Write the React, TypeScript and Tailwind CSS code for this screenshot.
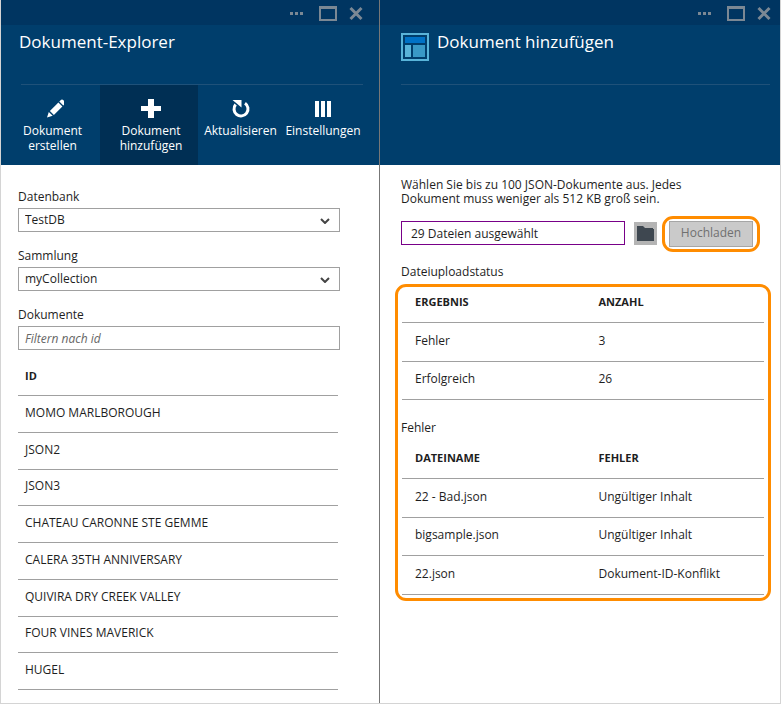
import type { ReactNode } from "react";

const documents = [
  "MOMO MARLBOROUGH",
  "JSON2",
  "JSON3",
  "CHATEAU CARONNE STE GEMME",
  "CALERA 35TH ANNIVERSARY",
  "QUIVIRA DRY CREEK VALLEY",
  "FOUR VINES MAVERICK",
  "HUGEL",
];

const results = [
  ["Fehler", "3"],
  ["Erfolgreich", "26"],
];

const errors = [
  ["22 - Bad.json", "Ungültiger Inhalt"],
  ["bigsample.json", "Ungültiger Inhalt"],
  ["22.json", "Dokument-ID-Konflikt"],
];

function WindowBar({ padding }: { padding: string }) {
  return (
    <div className={`flex h-[25px] items-center justify-end bg-[#003561] text-[#7b8894] ${padding}`}>
      <button type="button" aria-label="Mehr" className="mr-4">
        <svg width="14" height="16" viewBox="0 0 14 16" fill="currentColor" className="block" shapeRendering="crispEdges">
          <path d="M1 7h3v3H1zM6 7h3v3H6zM11 7h3v3h-3z" />
        </svg>
      </button>
      <button type="button" aria-label="Maximieren" className="mr-3">
        <svg width="18" height="16" viewBox="0 0 18 16" fill="currentColor" className="block" shapeRendering="crispEdges">
          <path fillRule="evenodd" d="M0 1h18v15H0zM2 4v10h14V4z" />
        </svg>
      </button>
      <button type="button" aria-label="Schließen">
        <svg width="14" height="16" viewBox="0 0 14 16" fill="none" stroke="currentColor" strokeWidth="3" className="block">
          <path d="M1.5 3l11 11M12.5 3l-11 11" />
        </svg>
      </button>
    </div>
  );
}

function ToolButton({ label, icon, size }: { label: string; icon: ReactNode; size: string }) {
  return (
    <button type="button" className={`flex h-20 flex-col items-center pt-[13px] text-[12px] leading-[15px] text-white ${size}`}>
      <svg width="22" height="20" viewBox="0 0 22 20" className="mb-[5px] block shrink-0">
        {icon}
      </svg>
      <span>{label}</span>
    </button>
  );
}

function SelectField({ id, label, value }: { id: string; label: string; value: string }) {
  return (
    <div className="mb-4">
      <label htmlFor={id} className="mb-[3px] block leading-4">{label}</label>
      <div className="relative">
        <select id={id} className="block h-6 w-full appearance-none rounded-none border border-[#a0a0a0] bg-white pl-[6px]">
          <option>{value}</option>
        </select>
        <svg width="10" height="6" viewBox="0 0 10 6" fill="none" stroke="#444" strokeWidth="2" className="pointer-events-none absolute top-[10px] right-[10px]">
          <path d="M1 1l4 4 4-4" />
        </svg>
      </div>
    </div>
  );
}

function ResultTable({ head, rows, label, size }: { head: string[]; rows: string[][]; label: string; size: string }) {
  return (
    <table aria-label={label} className={`w-full table-fixed border-separate border-spacing-0 text-left ${size}`}>
      <thead>
        <tr className="h-9">
          <th className="w-[54%] border-b border-[#a0a0a0] pb-[5px] pl-[13px] text-[11px]">{head[0]}</th>
          <th className="border-b border-[#a0a0a0] pb-[5px] pl-px text-[11px]">{head[1]}</th>
        </tr>
      </thead>
      <tbody>
        {rows.map((row) => (
          <tr key={row[0]}>
            <td className="border-b border-[#a0a0a0] pb-[2px] pl-[13px]">{row[0]}</td>
            <td className="border-b border-[#a0a0a0] pb-[2px] pl-px">{row[1]}</td>
          </tr>
        ))}
      </tbody>
    </table>
  );
}

export default function App() {
  return (
    <main className="grid min-h-screen grid-cols-[380fr_401fr] border-b border-[#d4d4d4] bg-white font-['Open_Sans','Segoe_UI',sans-serif] text-[12px] text-[#1e1e1e]">
      <section className="border-r border-l border-r-[#777] border-l-[#d4d4d4]">
        <header className="h-[165px] bg-[#003e6c]">
          <WindowBar padding="pr-4" />
          <div className="mr-4 ml-5 h-[60px] border-b border-[#1f5179] pt-[3px]">
            <h1 className="-ml-[2px] text-[17px] leading-7 text-white">Dokument-Explorer</h1>
          </div>
          <nav className="flex pl-1">
            <ToolButton
              label="Dokument erstellen"
              size="w-[95px] px-3"
              icon={
                <g fill="#fff" transform="translate(5 1)">
                  <path d="M0 18.500l1.800-5.600 3.900 3.900zM2.900 11.900l8.500-8.500 4 4-8.500 8.500zM12.300 2.500l1.300-1.300c.8-.8 2-.8 2.800 0l1.200 1.200c.8.8.8 2 0 2.800l-1.300 1.300z" />
                </g>
              }
            />
            <ToolButton
              label="Dokument hinzufügen"
              size="w-[98px] bg-[#002f54] pr-2 pl-3"
              icon={<path fill="#fff" d="M8 1h6v7h7v5h-7v7H8v-7H1V8h7z" />}
            />
            <ToolButton
              label="Aktualisieren"
              size="w-[85px]"
              icon={
                <g>
                  <path d="M5.600 6.500A7 7 0 1 0 15 5.200" fill="none" stroke="#fff" strokeWidth="3" />
                  <path fill="#fff" d="M2.500 2h9v7.500z" />
                </g>
              }
            />
            <ToolButton
              label="Einstellungen"
              size="w-20"
              icon={<path fill="#fff" shapeRendering="crispEdges" d="M3 3h4v16H3zM9 3h4v16H9zM15 3h4v16h-4z" />}
            />
          </nav>
        </header>

        <div className="pt-6 pr-[39px] pl-[17px]">
          <SelectField id="database" label="Datenbank" value="TestDB" />
          <SelectField id="collection" label="Sammlung" value="myCollection" />
          <label htmlFor="filter" className="mb-[3px] block leading-4">Dokumente</label>
          <input
            id="filter"
            type="text"
            placeholder="Filtern nach id"
            className="mb-[9px] block h-6 w-full border border-[#a0a0a0] px-[6px] italic placeholder:text-[#666]"
          />
          <div className="pr-[2px]">
            <table aria-label="Dokumente" className="h-[331px] w-full border-separate border-spacing-0 text-left">
              <thead>
                <tr className="h-[37px]">
                  <th className="border-b border-[#a0a0a0] pb-[2px] pl-[7px] text-[11px]">ID</th>
                </tr>
              </thead>
              <tbody>
                {documents.map((name) => (
                  <tr key={name}>
                    <td className="border-b border-[#a0a0a0] pb-[2px] pl-[7px]">{name}</td>
                  </tr>
                ))}
              </tbody>
            </table>
          </div>
        </div>
      </section>

      <section className="border-r border-[#d4d4d4]">
        <header className="h-[165px] bg-[#003e6c]">
          <WindowBar padding="pr-[9px]" />
          <div className="mr-[10px] ml-[21px] flex h-[60px] gap-2 border-b border-[#1f5179] pt-[3px]">
            <svg width="28" height="28" viewBox="0 0 28 28" className="mt-[5px] block" shapeRendering="crispEdges">
              <path fill="#59b4d9" d="M0 0h28v28H0z" />
              <path fill="#003e6c" d="M2 2h24v24H2z" />
              <path fill="#0072c6" d="M4 4h20v6H4z" />
              <path fill="#59b4d9" d="M4 12h6v12H4z" />
              <path fill="#3999c6" d="M12 12h12v12H12z" />
            </svg>
            <h2 className="text-[17px] leading-7 text-white">Dokument hinzufügen</h2>
          </div>
        </header>

        <div className="pt-[13px]">
          <p className="ml-[21px] max-w-[290px] leading-[14px]">
            Wählen Sie bis zu 100 JSON-Dokumente aus. Jedes Dokument muss weniger als 512 KB groß sein.
          </p>
          <div className="mt-[10px] mr-5 ml-[21px] flex items-start">
            <input
              type="text"
              aria-label="Ausgewählte Dateien"
              defaultValue="29 Dateien ausgewählt"
              className="mt-[5px] h-6 min-w-0 flex-1 border border-[#780088] px-[9px]"
            />
            <button type="button" aria-label="Dateien auswählen" className="mt-[6px] ml-[9px] flex h-[23px] w-[23px] items-center justify-center bg-[#b4b4b4]">
              <svg width="17" height="16" viewBox="0 0 17 16" fill="#3e4750" className="mb-[2px] block">
                <path d="M0 1h6l2 2h8v1h1v12H0z" />
              </svg>
            </button>
            <div className="ml-[5px] rounded-[11px] border-3 border-[#ff8c00] px-1 py-[2px]">
              <button type="button" disabled className="block h-[26px] w-[84px] border border-[#a6a6a6] bg-[#cacaca] pb-[2px] text-[#707070]">
                Hochladen
              </button>
            </div>
          </div>

          <h3 className="mt-3 ml-[21px] leading-4">Dateiuploadstatus</h3>
          <div className="mt-1 mr-[9px] ml-[15px] rounded-[11px] border-3 border-[#ff8c00] pr-1 pb-[3px] pl-1">
            <ResultTable label="Dateiuploadstatus" head={["ERGEBNIS", "ANZAHL"]} rows={results} size="h-[113px]" />
            <h3 className="mt-5 mb-[7px] -ml-px leading-4">Fehler</h3>
            <ResultTable label="Fehler" head={["DATEINAME", "FEHLER"]} rows={errors} size="h-[152px]" />
          </div>
        </div>
      </section>
    </main>
  );
}
